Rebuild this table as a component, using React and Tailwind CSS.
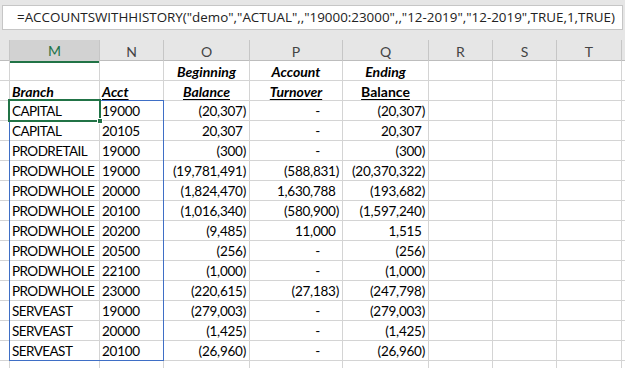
import React from "react";

// Accounts with history sheet
const COLS = ["M", "N", "O", "P", "Q", "R", "S", "T"];

const rows = [
  ["CAPITAL", "19000", "(20,307)", "-", "(20,307)"],
  ["CAPITAL", "20105", "20,307", "-", "20,307"],
  ["PRODRETAIL", "19000", "(300)", "-", "(300)"],
  ["PRODWHOLE", "19000", "(19,781,491)", "(588,831)", "(20,370,322)"],
  ["PRODWHOLE", "20000", "(1,824,470)", "1,630,788", "(193,682)"],
  ["PRODWHOLE", "20100", "(1,016,340)", "(580,900)", "(1,597,240)"],
  ["PRODWHOLE", "20200", "(9,485)", "11,000", "1,515"],
  ["PRODWHOLE", "20500", "(256)", "-", "(256)"],
  ["PRODWHOLE", "22100", "(1,000)", "-", "(1,000)"],
  ["PRODWHOLE", "23000", "(220,615)", "(27,183)", "(247,798)"],
  ["SERVEAST", "19000", "(279,003)", "-", "(279,003)"],
  ["SERVEAST", "20000", "(1,425)", "-", "(1,425)"],
  ["SERVEAST", "20100", "(26,960)", "-", "(26,960)"],
];

const grid = "grid grid-cols-[10px_90px_64px_86px_93px_86px_64px_64px_65px_1fr]";
const cell = "h-[20px] border-r border-b border-[#d4d4d4] flex items-end pb-[0px] leading-[17px] overflow-visible whitespace-nowrap";

function Num({ v }) {
  if (v === "-") {
    return <div className={`${cell} justify-end pr-[22px]`}>-</div>;
  }
  const neg = v.endsWith(")");
  return (
    <div className={`${cell} justify-end pr-[3px]`}>
      {v}
      {!neg && <span className="invisible">)</span>}
    </div>
  );
}

function Blank() {
  return <div className={cell}></div>;
}

export default function App() {
  return (
    <div className="relative w-[625px] h-[368px] overflow-hidden bg-white text-[13.5px] tracking-[-0.25px] text-black font-['Lato',sans-serif]">
      {/* formula bar */}
      <div className="h-[40px] bg-[#e6e6e6] pt-[5px] px-[2px]">
        <div className="h-[25px] bg-white border border-[#c6c6c6] flex items-center pl-[14px] text-[13.4px] tracking-normal text-[#222] font-['Open_Sans',sans-serif] whitespace-nowrap">
          =ACCOUNTSWITHHISTORY("demo","ACTUAL",,"19000:23000",,"12-2019","12-2019",TRUE,1,TRUE)
        </div>
      </div>

      {/* column headers */}
      <div className={`${grid} h-[21px] bg-[#e6e6e6] border-b border-[#bdbdbd] text-[14px] tracking-normal`}>
        <div className="border-r border-[#c6c6c6]"></div>
        {COLS.map((c) => (
          <div
            key={c}
            className={
              c === "M"
                ? "bg-[#d2d2d2] border-r border-[#c6c6c6] border-b-2 border-b-[#217346] flex items-center justify-center text-[#217346]"
                : "border-r border-[#c6c6c6] flex items-center justify-center text-[#444]"
            }
          >
            {c}
          </div>
        ))}
        <div></div>
      </div>

      {/* title rows */}
      <div className={`${grid} font-bold text-[14px] tracking-normal`}>
        <Blank />
        <Blank />
        <Blank />
        <div className={`${cell} justify-center italic`}>Beginning</div>
        <div className={`${cell} justify-center italic`}>Account</div>
        <div className={`${cell} justify-center italic`}>Ending</div>
        <Blank />
        <Blank />
        <Blank />
        <div className="h-[20px] border-b border-[#d4d4d4]"></div>

        <Blank />
        <div className={`${cell} pl-[2px] italic underline underline-offset-2`}>Branch</div>
        <div className={`${cell} pl-[2px] italic underline underline-offset-2`}>Acct</div>
        <div className={`${cell} justify-center italic underline underline-offset-2`}>Balance</div>
        <div className={`${cell} justify-center italic underline underline-offset-2`}>Turnover</div>
        <div className={`${cell} justify-center underline underline-offset-2`}>Balance</div>
        <Blank />
        <Blank />
        <Blank />
        <div className="h-[20px] border-b border-[#d4d4d4]"></div>
      </div>

      {/* data rows */}
      <div className={grid}>
        {rows.map((r, i) => (
          <React.Fragment key={i}>
            <Blank />
            <div className={`${cell} pl-[2px] tracking-[-0.55px]`}>{r[0]}</div>
            <div className={`${cell} pl-[2px]`}>{r[1]}</div>
            <Num v={r[2]} />
            <Num v={r[3]} />
            <Num v={r[4]} />
            <Blank />
            <Blank />
            <Blank />
            <div className="h-[20px] border-b border-[#d4d4d4]"></div>
          </React.Fragment>
        ))}
        {COLS.concat(["x", "y"]).map((c) => (
          <div key={c} className={c === "y" ? "h-[20px]" : cell}></div>
        ))}
      </div>

      {/* range highlight M4:N16 */}
      <div className="absolute left-[9px] top-[100px] w-[155px] h-[261px] border border-[#3f6fc6] pointer-events-none"></div>
      {/* active cell M4 */}
      <div className="absolute left-[8px] top-[99px] w-[93px] h-[23px] border-2 border-[#217346] pointer-events-none"></div>
      <div className="absolute left-[97px] top-[118px] w-[6px] h-[6px] bg-[#217346] border border-white pointer-events-none"></div>
    </div>
  );
}
